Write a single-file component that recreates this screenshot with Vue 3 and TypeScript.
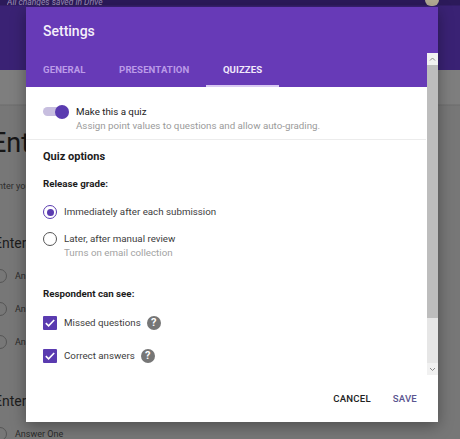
<script setup lang="ts">
const tabs = [
  { label: 'GENERAL', active: false },
  { label: 'PRESENTATION', active: false },
  { label: 'QUIZZES', active: true },
]
const bgRows = [
  { label: 'Answer', cls: 'r1' },
  { label: 'Answer', cls: 'r2' },
  { label: 'Answer', cls: 'r3' },
]
const checks = ['Missed questions', 'Correct answers']
</script>

<template>
  <div class="page">
    <div class="appbar">
      <span class="saved">All changes saved in Drive</span>
      <span class="avatar"></span>
    </div>
    <div class="form">
      <div class="h1">Enter</div>
      <div class="sub">Enter your</div>
      <div class="h2 first">Enter</div>
      <div v-for="r in bgRows" :key="r.cls" class="brow">
        <span class="bradio"></span><span>Answer</span>
      </div>
      <div class="h2 second">Enter</div>
      <div class="brow"><span class="bradio"></span><span>Answer One</span></div>
    </div>

    <section class="dialog">
      <header class="head">
        <h1 class="title">Settings</h1>
        <nav class="tabs">
          <span v-for="t in tabs" :key="t.label" class="tab" :class="{ on: t.active }">{{ t.label }}</span>
        </nav>
      </header>
      <div class="bodywrap">
        <div class="body">
          <div class="quiz">
            <span class="switch"><span class="knob"></span></span>
            <div>
              <div class="qt">Make this a quiz</div>
              <div class="qs">Assign point values to questions and allow auto-grading.</div>
            </div>
          </div>
          <div class="options">
            <h2 class="opt">Quiz options</h2>
            <h3 class="lab">Release grade:</h3>
            <div class="ritem">
              <span class="radio sel"><span class="dot"></span></span>
              <span class="txt">Immediately after each submission</span>
            </div>
            <div class="ritem second-r">
              <span class="radio"></span>
              <div>
                <div class="txt">Later, after manual review</div>
                <div class="hint">Turns on email collection</div>
              </div>
            </div>
            <h3 class="lab see">Respondent can see:</h3>
            <div class="checks">
              <div v-for="c in checks" :key="c" class="citem">
                <span class="check">
                  <svg viewBox="0 0 14 14" width="14" height="14"><path d="M2.8 7.2 5.6 9.9 11.2 4" fill="none" stroke="#fff" stroke-width="1.6"/></svg>
                </span>
                <span class="txt">{{ c }}</span>
                <span class="help">?</span>
              </div>
            </div>
          </div>
        </div>
      </div>
      <footer class="foot">
        <span class="btn cancel">CANCEL</span>
        <span class="btn save">SAVE</span>
      </footer>
      <div class="scroll">
        <div class="arrow up"><svg viewBox="0 0 11 12" width="11" height="12"><path d="M3 7.5 5.5 5 8 7.5" fill="none" stroke="#8a8a8a" stroke-width="1"/></svg></div>
        <div class="track"><div class="thumb"></div></div>
        <div class="arrow down"><svg viewBox="0 0 11 12" width="11" height="12"><path d="M3 5 5.5 7.5 8 5" fill="none" stroke="#8a8a8a" stroke-width="1"/></svg></div>
      </div>
    </section>
  </div>
</template>

<style>
html, body { margin: 0; background: #777; }
</style>

<style scoped>
.page {
  position: relative;
  width: 460px;
  height: 439px;
  overflow: hidden;
  background: #767676;
  font-family: Roboto, "Liberation Sans", sans-serif;
}
.appbar {
  height: 70px;
  background: linear-gradient(#2c1a5a 0, #2c1a5a 5px, #3a2274 6px);
  display: flex;
  justify-content: space-between;
  padding: 0 21px 0 7px;
  box-sizing: border-box;
}
.saved {
  color: #9d90b8;
  font-size: 8.5px;
  font-style: italic;
  line-height: 5px;
  height: 6px;
  overflow: hidden;
}
.avatar {
  width: 14px;
  height: 6px;
  border-radius: 0 0 7px 7px;
  background: #b3ab94;
}
.form {
  color: #1a1a1a;
  height: 369px;
  background: linear-gradient(#7e7e7e 0, #7e7e7e 34px, #6c6c6c 35px, #777 36px);
}
.h1 { font-size: 27px; line-height: 36px; padding-top: 55px; margin-left: -9px; color: #161616; }
.sub { font-size: 9px; line-height: 12px; margin-top: 19px; margin-left: -7px; color: #2e2e2e; }
.h2 { font-size: 14px; line-height: 20px; margin-left: -6px; color: #1d1d1d; }
.h2.first { margin-top: 41px; margin-bottom: 6.5px; }
.h2.second { margin-top: 32.5px; margin-bottom: 6.5px; }
.brow {
  display: flex;
  align-items: center;
  gap: 8px;
  height: 33px;
  font-size: 9px;
  color: #2a2a2a;
  margin-left: -7px;
}
.bradio { width: 12px; height: 12px; border: 1px solid #555; border-radius: 50%; }

.dialog {
  position: absolute;
  left: 26px;
  top: 7px;
  width: 412px;
  height: 415px;
  background: #fff;
  display: flex;
  flex-direction: column;
  box-shadow: 0 4px 14px rgba(0, 0, 0, .35);
}
.head {
  height: 80px;
  background: #673ab7;
  box-sizing: border-box;
  flex: none;
}
.title {
  margin: 0;
  padding: 15px 0 0 17px;
  font-size: 14px;
  line-height: 18px;
  font-weight: 500;
  color: #f5f0fa;
}
.tabs {
  display: flex;
  margin-top: 16px;
  padding-left: 17px;
  font-size: 9.6px;
  font-weight: 700;
}
.tab {
  color: #bb9be8;
  line-height: 28px;
  height: 31px;
  box-sizing: border-box;
  margin-right: 33.5px;
  letter-spacing: .1px;
}
.tab.on {
  color: #f1e9fb;
  margin-left: -17px;
  padding: 0 17px;
  border-bottom: 2px solid #d9c9f2;
}
.bodywrap { flex: 1; overflow: hidden; margin-right: 11px; }
.quiz {
  display: flex;
  gap: 7px;
  height: 53px;
  padding: 19px 0 0 17px;
  box-sizing: border-box;
  border-bottom: 1px solid #ececec;
  margin-right: 1px;
}
.switch {
  position: relative;
  width: 26px;
  height: 9px;
  margin-top: 1px;
  border-radius: 5px;
  background: #c7bedf;
  flex: none;
}
.knob {
  position: absolute;
  right: 0;
  top: -2.5px;
  width: 14px;
  height: 14px;
  border-radius: 50%;
  background: #5a3bb0;
}
.qt { font-size: 9.75px; line-height: 14px; color: #222; margin-top: -1px; }
.qs { font-size: 9.75px; line-height: 14px; color: #9a9a9a; margin-top: 0; }
.options { padding: 0 0 0 17px; }
.opt { margin: 0; padding-top: 9.5px; font-size: 11px; line-height: 14px; font-weight: 700; color: #1c1c1c; }
.lab { margin: 0; font-size: 9.75px; line-height: 14px; font-weight: 700; color: #1c1c1c; padding-top: 13.5px; }
.lab.see { padding-top: 0; margin-top: 27px; }
.ritem { display: flex; gap: 7px; margin-top: 14px; }
.second-r { margin-top: 13px; }
.radio {
  width: 12px;
  height: 12px;
  border: 1px solid #555;
  border-radius: 50%;
  flex: none;
  display: flex;
  align-items: center;
  justify-content: center;
}
.radio.sel { border-color: #5a3bb0; }
.dot { width: 7px; height: 7px; border-radius: 50%; background: #5a3bb0; }
.txt { font-size: 9.75px; line-height: 14px; color: #3c3c3c; }
.hint { font-size: 9.75px; line-height: 14px; color: #a2a2a2; }
.checks { display: flex; flex-direction: column; gap: 19px; margin-top: 15px; }
.citem { display: flex; align-items: center; gap: 7px; height: 14px; }
.check {
  width: 14px;
  height: 14px;
  background: #5a3bb0;
  border-radius: 1px;
  display: block;
  flex: none;
}
.check svg { display: block; }
.help {
  width: 14px;
  height: 14px;
  border-radius: 50%;
  background: #767676;
  color: #fff;
  font-size: 11px;
  font-weight: 700;
  line-height: 14px;
  text-align: center;
  margin-left: -1px;
}
.foot {
  flex: none;
  height: 48px;
  display: flex;
  justify-content: flex-end;
  align-items: flex-start;
  gap: 22px;
  padding: 19px 21px 0 0;
  box-sizing: border-box;
  font-size: 9.6px;
  font-weight: 500;
  letter-spacing: .2px;
}
.cancel { color: #222; }
.save { color: #5a5590; }
.scroll {
  position: absolute;
  right: 0;
  top: 46px;
  width: 11px;
  height: 322px;
  background: #e6e6e6;
  display: flex;
  flex-direction: column;
}
.arrow { height: 12px; background: #f1f1f1; flex: none; }
.arrow svg { display: block; }
.track { flex: 1; }
.thumb { height: 253px; background: #bdbdbd; }
</style>
